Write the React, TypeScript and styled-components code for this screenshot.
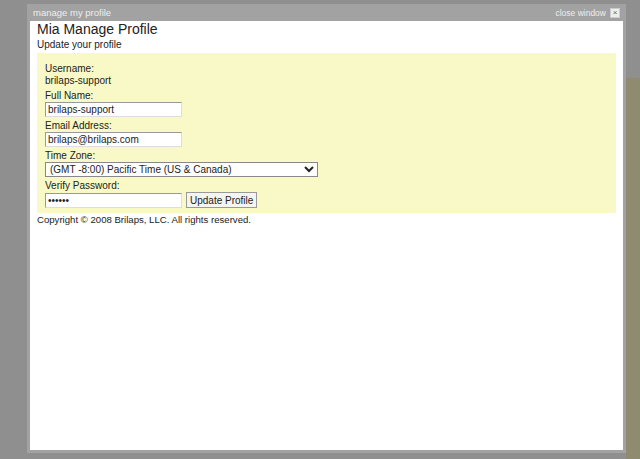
import React from "react";
import styled, { createGlobalStyle } from "styled-components";

const Global = createGlobalStyle`
  html, body { margin: 0; padding: 0; }
  body { width: 640px; height: 459px; overflow: hidden; background: #8e8e8e; font-family: "Liberation Sans", Arial, sans-serif; }
`;

const Page = styled.div`
  position: relative;
  width: 640px;
  height: 459px;
  background: #8f8f8f;
`;

const RightStrip = styled.div`
  position: absolute;
  left: 626px; top: 78px; width: 14px; height: 381px;
  background: #8e8b70;
`;

const Window = styled.div`
  position: absolute;
  left: 27px; top: 4px;
  width: 599px; height: 449px;
  background: #a2a2a2;
  display: flex; flex-direction: column;
  padding: 0 3px 3px 3px;
  box-sizing: border-box;
`;

const TitleBar = styled.div`
  height: 17px;
  display: flex; align-items: center; justify-content: space-between;
  font-size: 9.5px; color: #eee;
  padding: 0 3px 0 3px;
`;

const Close = styled.span`
  display: flex; align-items: center; gap: 4px; color: #eee; font-size: 8.5px;
`;

const CloseBox = styled.span`
  width: 8px; height: 8px; background: #eee; color: #666;
  font-size: 8px; line-height: 8px; text-align: center; border: 1px solid #ccc;
`;

const Body = styled.div`
  flex: 1;
  background: #fff;
  padding: 0 7px 0 7px;
  color: #222;
`;

const H1 = styled.div`
  font-size: 14px; line-height: 16px;
`;

const Sub = styled.div`
  font-size: 10px; margin-top: 1px; line-height: 14px;
`;

const Box = styled.div`
  margin-top: 1px;
  background: #f8f9c6;
  padding: 10px 8px 5px 8px;
  font-size: 10px;
  display: flex; flex-direction: column;
`;

const Label = styled.div<{ first?: boolean }>`
  line-height: 12px; margin-top: ${(p) => (p.first ? 0 : 3)}px;
`;

const Input = styled.input`
  width: 137px; height: 15px; box-sizing: border-box;
  font: 10px "Liberation Sans", Arial, sans-serif;
  padding: 0 2px; border: 1px solid #999; border-right-color: #ddd; border-bottom-color: #ddd;
  background: #fff; color: #222;
`;

const Select = styled.select`
  width: 273px; height: 15px; font: 10px "Liberation Sans", Arial, sans-serif;
  padding: 0; border: 1px solid #888; background: #fff; color: #222;
`;

const Row = styled.div`
  display: flex; align-items: center; gap: 4px;
`;

const Button = styled.button`
  height: 16px; padding: 0 3px; font: 10px "Liberation Sans", Arial, sans-serif;
  background: #f4f4f0; border: 1px solid #999; color: #222;
`;

const Foot = styled.div`
  font-size: 9.6px; margin-top: 1px;
`;

export default function App() {
  return (
    <Page>
      <Global />
      <RightStrip />
      <Window>
        <TitleBar>
          <span>manage my profile</span>
          <Close>close window <CloseBox>×</CloseBox></Close>
        </TitleBar>
        <Body>
          <H1>Mia Manage Profile</H1>
          <Sub>Update your profile</Sub>
          <Box>
            <Label first>Username:</Label>
            <Label first>brilaps-support</Label>
            <Label>Full Name:</Label>
            <Input defaultValue="brilaps-support" />
            <Label>Email Address:</Label>
            <Input defaultValue="brilaps@brilaps.com" />
            <Label>Time Zone:</Label>
            <Select defaultValue="pt"><option value="pt">(GMT -8:00) Pacific Time (US &amp; Canada)</option></Select>
            <Label>Verify Password:</Label>
            <Row>
              <Input type="password" defaultValue="******" />
              <Button>Update Profile</Button>
            </Row>
          </Box>
          <Foot>Copyright © 2008 Brilaps, LLC. All rights reserved.</Foot>
        </Body>
      </Window>
    </Page>
  );
}
